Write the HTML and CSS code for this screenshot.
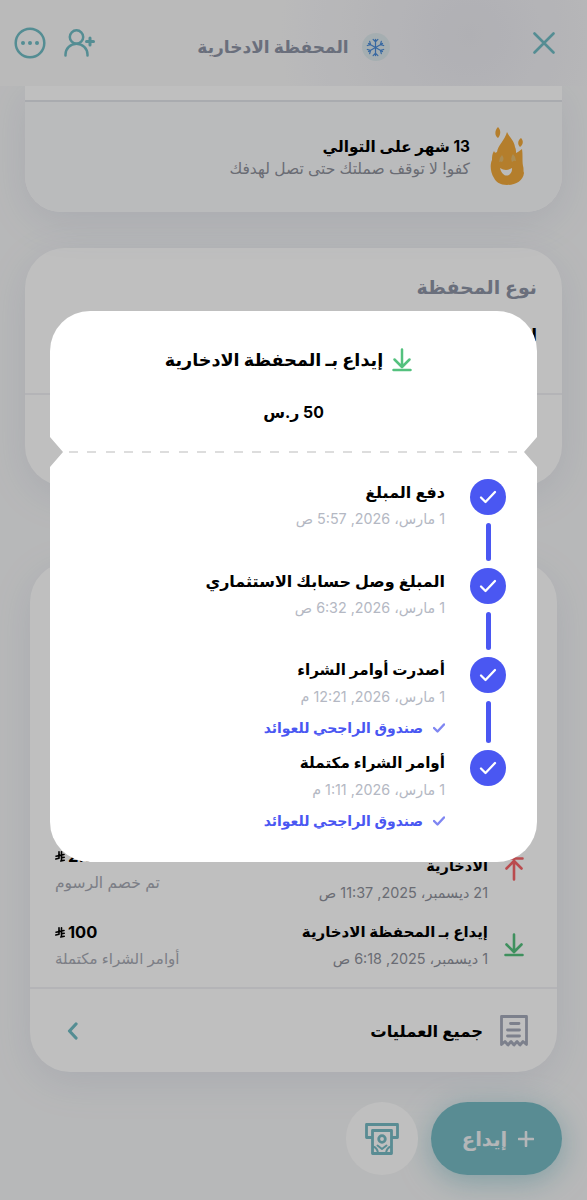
FILE: index.html
```html
<!DOCTYPE html>
<html lang="ar" dir="rtl">
<head>
    <meta charset="UTF-8">
    <title>المحفظة الادخارية</title>
    <link rel="stylesheet" href="styles.css">
</head>
<body>
    <div class="screen">
        <header class="header">
            <svg class="close" width="22" height="22" viewBox="0 0 22 22"><path d="M1.5 1.5l19 19M20.5 1.5l-19 19"/></svg>
            <div class="header-title">
                <span class="avatar">
                    <svg width="19" height="19" viewBox="-10 -10 20 20">
                        <g id="arm"><path d="M0 0V-8.500M-2.500-8.500L0-6L2.500-8.500"/></g>
                        <use href="#arm" transform="rotate(60)"/>
                        <use href="#arm" transform="rotate(120)"/>
                        <use href="#arm" transform="rotate(180)"/>
                        <use href="#arm" transform="rotate(240)"/>
                        <use href="#arm" transform="rotate(300)"/>
                    </svg>
                </span>
                <h1>المحفظة الادخارية</h1>
            </div>
            <div class="header-actions">
                <svg width="32" height="30" viewBox="0 0 32 30"><circle cx="13.500" cy="9" r="6.700"/><path d="M2.500 27.500v-1c0-6 5-10.800 11-10.800s11 4.800 11 10.800v1"/><path d="M27 10v7M23.500 13.500h7" class="plus"/></svg>
                <svg width="32" height="32" viewBox="0 0 32 32"><circle cx="16" cy="16" r="14.300"/><g class="dots"><circle cx="9" cy="16" r="2"/><circle cx="16" cy="16" r="2"/><circle cx="23" cy="16" r="2"/></g></svg>
            </div>
        </header>

        <section class="card streak">
            <div class="streak-row">
                <svg class="flame" width="34" height="58" viewBox="0 0 34 58">
                    <path d="M8 0c3 3 3 7 0 11-4-3-3-8 0-11zM31 11c3 3 2 7-1 9-3-3-2-7 1-9z"/>
                    <path d="M17 5c2 5 7 8 8 15 1 2 1 4 1 6 3-1 4-3 6-4 1 6 0 10 1 17 1 3 0 5 1 7-1 8-8 12-17 12-7 0-11-3-13-7-4-6-4-14-2-18 0-3 0-6 2-9 1 2 1 2 3 1 1-7 8-12 10-20z"/>
                    <path class="face" d="M10 41q6 4 12 0c1 8-9 12-12 0z"/>
                    <path class="eye" d="M9 35q0-4 3-7 3 4 0 7-2-1-3 0zM22 35q-2-4 1-8 3 3 3 7-2-1-4 1z"/>
                </svg>
                <div>
                    <h2>13 شهر على التوالي</h2>
                    <p>كفو! لا توقف صملتك حتى تصل لهدفك</p>
                </div>
            </div>
        </section>

        <section class="card wallet">
            <h2>نوع المحفظة</h2>
            <p>ادخارية</p>
            <div class="wallet-bottom"></div>
        </section>

        <section class="card history">
            <div class="tx tx-fee">
                <svg width="20" height="24" viewBox="0 0 20 24"><path d="M1.500 1.500h17M10 22.500V3M2.500 11.500L10 4l7.500 7.500"/></svg>
                <div class="tx-info">
                    <b>الادخارية</b>
                    <span>21 ديسمبر، 2025, 11:37 ص</span>
                </div>
                <div class="tx-sum">
                    <b>2.30 <svg class="riyal" width="10" height="11" viewBox="0 0 10 11"><path d="M4 .8v6.400L.8 8M6.500.8v8M1 5.200l8-1.700M6.500 6.800l2.700-.6M5.800 10l3.400-.8"/></svg></b>
                    <span>تم خصم الرسوم</span>
                </div>
            </div>
            <div class="tx tx-in">
                <svg width="20" height="24" viewBox="0 0 20 24"><path d="M1.500 22h17M10 1.500v17M2.500 11.500L10 19l7.500-7.500"/></svg>
                <div class="tx-info">
                    <b>إيداع بـ المحفظة الادخارية</b>
                    <span>1 ديسمبر، 2025, 6:18 ص</span>
                </div>
                <div class="tx-sum">
                    <b>100 <svg class="riyal" width="10" height="11" viewBox="0 0 10 11"><path d="M4 .8v6.400L.8 8M6.500.8v8M1 5.200l8-1.700M6.500 6.800l2.700-.6M5.800 10l3.400-.8"/></svg></b>
                    <span>أوامر الشراء مكتملة</span>
                </div>
            </div>
            <div class="all">
                <svg class="receipt" width="28" height="32" viewBox="0 0 28 32"><path d="M1.500 29.500V1.500h25v28l-3.500-3-3 3.500-3-3.500-3 3.500-3-3.500-3 3.500-3-3.500zM10.500 8.500h8.500M7.500 15h12M7.500 21h12"/></svg>
                <b>جميع العمليات</b>
                <svg class="chevron" width="11" height="18" viewBox="0 0 11 18"><path d="M9 2L2.500 9 9 16"/></svg>
            </div>
        </section>

        <div class="actions">
            <button class="deposit"><svg width="16" height="16" viewBox="0 0 16 16"><path d="M8 1v14M1 8h14"/></svg><span>إيداع</span></button>
            <button class="withdraw">
                <svg width="34" height="32" viewBox="0 0 34 32"><path d="M7 14.500H1.500v-13h31v13H27"/><path d="M7.500 30.500V7.500h19v23z"/><circle cx="17" cy="16" r="3.300"/><path d="M8 23.500q4.500 1.500 5 6.500M26 23.500q-4.500 1.500-5 6.500M12.500 22.500l4.500 3.500 4.500-3.500" stroke-width="2"/></svg>
            </button>
        </div>
    </div>

    <div class="overlay">
        <div class="modal">
            <div class="modal-head">
                <div class="modal-title">
                    <svg width="20" height="24" viewBox="0 0 20 24"><path d="M1.500 22h17M10 1.500v17M2.500 11.500L10 19l7.500-7.500"/></svg>
                    <h2>إيداع بـ المحفظة الادخارية</h2>
                </div>
                <div class="amount">50 ر.س</div>
            </div>
            <div class="dashes"></div>
            <ol class="steps">
                <li>
                    <div class="marker"><i><svg width="18" height="14" viewBox="0 0 18 14"><path d="M2 7.500l4.500 4.500L16 2"/></svg></i></div>
                    <div><h3>دفع المبلغ</h3><time>1 مارس، 2026, 5:57 ص</time></div>
                </li>
                <li>
                    <div class="marker"><i><svg width="18" height="14" viewBox="0 0 18 14"><path d="M2 7.500l4.500 4.500L16 2"/></svg></i></div>
                    <div><h3>المبلغ وصل حسابك الاستثماري</h3><time>1 مارس، 2026, 6:32 ص</time></div>
                </li>
                <li class="tall">
                    <div class="marker"><i><svg width="18" height="14" viewBox="0 0 18 14"><path d="M2 7.500l4.500 4.500L16 2"/></svg></i></div>
                    <div>
                        <h3 class="small">أصدرت أوامر الشراء</h3><time>1 مارس، 2026, 12:21 م</time>
                        <p><svg width="12" height="10" viewBox="0 0 12 10"><path d="M1 5l3.500 3.500L11 1.500"/></svg><span>صندوق الراجحي للعوائد</span></p>
                    </div>
                </li>
                <li>
                    <div class="marker"><i><svg width="18" height="14" viewBox="0 0 18 14"><path d="M2 7.500l4.500 4.500L16 2"/></svg></i></div>
                    <div>
                        <h3 class="small">أوامر الشراء مكتملة</h3><time>1 مارس، 2026, 1:11 م</time>
                        <p><svg width="12" height="10" viewBox="0 0 12 10"><path d="M1 5l3.500 3.500L11 1.500"/></svg><span>صندوق الراجحي للعوائد</span></p>
                    </div>
                </li>
            </ol>
        </div>
    </div>
</body>
</html>
```

FILE: styles.css
```css
* {
    margin: 0;
    padding: 0;
    box-sizing: border-box;
}
body {
    width: 587px;
    height: 1200px;
    overflow: hidden;
    position: relative;
    background: #f5f6f7;
    font-family: Inter, "DejaVu Sans", sans-serif;
    color: #000;
}
svg {
    display: block;
    fill: none;
    stroke: currentColor;
    stroke-linecap: round;
    stroke-linejoin: round;
    flex: none;
}
h1, h2, h3, p, b, span, time {
    white-space: nowrap;
}
.screen {
    height: 1200px;
    display: flex;
    flex-direction: column;
}

/* header */
.header {
    height: 86px;
    padding: 0 32px 0 15px;
    display: grid;
    grid-template-columns: 80px 1fr 80px;
    align-items: center;
    color: #70bcc4;
    background: radial-gradient(circle at 470px 35px, #ebebf1, #f8f8f9 190px);
}
.close {
    stroke-width: 2.6;
}
.header-title {
    display: flex;
    align-items: center;
    justify-content: center;
    gap: 13px;
    padding: 8px 0 0 17px;
}
.header-title h1 {
    font-size: 17px;
    line-height: 24px;
    color: #8e94a6;
}
.avatar {
    width: 28px;
    height: 28px;
    border-radius: 50%;
    background: #dde9ec;
    color: #4a8bd8;
    display: flex;
    align-items: center;
    justify-content: center;
}
.avatar svg {
    stroke-width: 1.3;
}
.header-actions {
    display: flex;
    align-items: center;
    gap: 17px;
    stroke-width: 2.5;
}
.header-actions .plus {
    stroke-width: 3;
}
.dots {
    fill: currentColor;
    stroke: none;
}

/* cards */
.card {
    background: #fff;
    margin: 0 25px;
    box-shadow: 0 10px 40px rgba(110, 115, 160, .13);
}
.streak {
    height: 126px;
    border-radius: 0 0 36px 36px;
    padding-top: 14px;
    clip-path: inset(0 -60px -60px -60px);
}
.streak-row {
    height: 112px;
    padding: 0 38px 0 0;
    border-top: 2px solid #e2e5ea;
    border-radius: 0 0 36px 36px;
    background: #f9fafb;
    display: flex;
    align-items: center;
    gap: 20px;
}
.flame {
    margin-top: -3px;
}
.flame path {
    fill: #f1a93b;
    stroke: none;
}
.flame .face {
    fill: #f9fafb;
}
.flame .eye {
    fill: #e5bc70;
}
.streak h2 {
    font-size: 15.3px;
    line-height: 22px;
}
.streak p {
    font-size: 15.5px;
    line-height: 21px;
    color: #8e919b;
}
.wallet {
    height: 238px;
    margin-top: 36px;
    border-radius: 40px;
    padding-top: 28px;
}
.wallet h2 {
    font-size: 19px;
    font-weight: 600;
    line-height: 24px;
    padding-right: 25px;
    color: #8e94a6;
}
.wallet p {
    margin-top: 23px;
    font-size: 17px;
    font-weight: bold;
    line-height: 24px;
    padding-right: 25px;
}
.wallet-bottom {
    margin-top: 46px;
    border-top: 2px solid #f1f1f4;
}
.history {
    height: 510px;
    margin: 76px 30px 0;
    border-radius: 40px;
    padding-top: 292px;
}
.tx {
    padding: 0 33px 0 25px;
    display: flex;
}
.tx > svg {
    margin-top: 3px;
    stroke-width: 2.6;
}
.tx-fee {
    height: 66px;
}
.tx-fee > svg {
    color: #f96469;
}
.tx-in {
    height: 67px;
}
.tx-in > svg {
    margin-top: 13px;
    color: #54c17e;
}
.tx b {
    display: block;
    font-size: 15px;
    line-height: 24px;
}
.tx span {
    display: block;
    font-size: 14.4px;
    line-height: 20px;
    color: #8e919b;
}
.tx-info {
    margin-right: 16px;
}
.tx-info span {
    margin-top: 5px;
}
.tx-fee .tx-info b {
    font-size: 14.5px;
}
.tx-sum {
    margin-right: auto;
    direction: ltr;
}
.tx-fee .tx-sum {
    margin-top: -10px;
}
.tx .tx-sum b {
    display: flex;
    flex-direction: row-reverse;
    justify-content: flex-end;
    align-items: center;
    gap: 3px;
    font-size: 16.5px;
}
.tx-sum span {
    margin-top: 5px;
    font-size: 15px;
    color: #a6a9b3;
}
.tx-fee .tx-sum span {
    font-size: 15.5px;
}
.riyal {
    stroke-width: 1.6;
}
.all {
    height: 85px;
    border-top: 2px solid #f1f1f4;
    padding: 0 29px 0 37px;
    display: flex;
    align-items: center;
}
.all b {
    margin-right: 17px;
    font-size: 16.4px;
    font-weight: 600;
}
.receipt {
    color: #a6abbb;
    stroke-width: 2.8;
}
.chevron {
    margin-right: auto;
    color: #70bcc4;
    stroke-width: 3.2;
}

/* bottom buttons */
.actions {
    margin: 30px 25px 0;
    display: flex;
    gap: 13px;
}
.actions button {
    height: 73px;
    border: none;
    border-radius: 37px;
    display: flex;
    align-items: center;
    justify-content: center;
    font: 600 19.5px/24px Inter, "DejaVu Sans", sans-serif;
}
.deposit {
    width: 131px;
    gap: 11px;
    padding-left: 3px;
    background: #77bbc5;
    color: #f1f3f6;
    stroke-width: 2.6;
    box-shadow: 0 6px 30px rgba(119, 187, 197, .6);
}
.deposit svg {
    margin-top: 1px;
}
.withdraw {
    width: 72px;
    background: #fff;
    color: #77bbc5;
    stroke-width: 2.8;
}

/* popup */
.overlay {
    position: absolute;
    inset: 0;
    background: rgba(0, 0, 0, .25);
    display: flex;
    flex-direction: column;
    align-items: center;
    padding-top: 311px;
}
.modal {
    width: 487px;
    height: 551px;
    border-radius: 40px;
    background: #fff;
    clip-path: polygon(0 0, 100% 0, 100% 126px, calc(100% - 13px) 141px, 100% 156px, 100% 100%, 0 100%, 0 156px, 13px 141px, 0 126px);
}
.modal-head {
    height: 140px;
    padding-top: 37px;
}
.modal-title {
    display: flex;
    justify-content: center;
    align-items: center;
    gap: 9px;
    padding-right: 10px;
    stroke-width: 2.5;
}
.modal-title svg {
    color: #54c17e;
}
.modal-title h2 {
    font-size: 17.6px;
    line-height: 24px;
}
.amount {
    margin-top: 29px;
    text-align: center;
    font-size: 15.8px;
    font-weight: bold;
    line-height: 24px;
}
.dashes {
    height: 2px;
    margin: 0 19px;
    background: repeating-linear-gradient(90deg, #ddd 0 9px, transparent 9px 18.3px);
}
.steps {
    list-style: none;
    padding: 26px 31px 0 0;
}
.steps li {
    height: 89px;
    display: flex;
    gap: 25px;
}
.steps .tall {
    height: 93px;
}
.marker {
    width: 36px;
    display: flex;
    flex-direction: column;
    align-items: center;
}
.marker i {
    width: 36px;
    height: 36px;
    border-radius: 50%;
    background: #4a57f2;
    color: #fff;
    display: flex;
    align-items: center;
    justify-content: center;
    stroke-width: 2.3;
}
.marker::after {
    content: "";
    width: 5px;
    flex: 1;
    margin: 8px 0 7px;
    border-radius: 3px;
    background: #4a57f2;
}
.steps li:last-child .marker::after {
    display: none;
}
.steps h3 {
    font-size: 16px;
    font-weight: 600;
    line-height: 26px;
}
.steps .small {
    font-size: 15.2px;
}
.steps time {
    display: block;
    margin-top: 1px;
    font-size: 14.3px;
    line-height: 26px;
    color: #b4b8c3;
}
.steps p {
    display: flex;
    align-items: center;
    gap: 10px;
    margin-top: 6px;
    font-size: 14px;
    font-weight: 600;
    line-height: 24px;
    color: #4a57f2;
}
.steps p svg {
    color: #7f86f2;
    stroke-width: 2.4;
}
```
